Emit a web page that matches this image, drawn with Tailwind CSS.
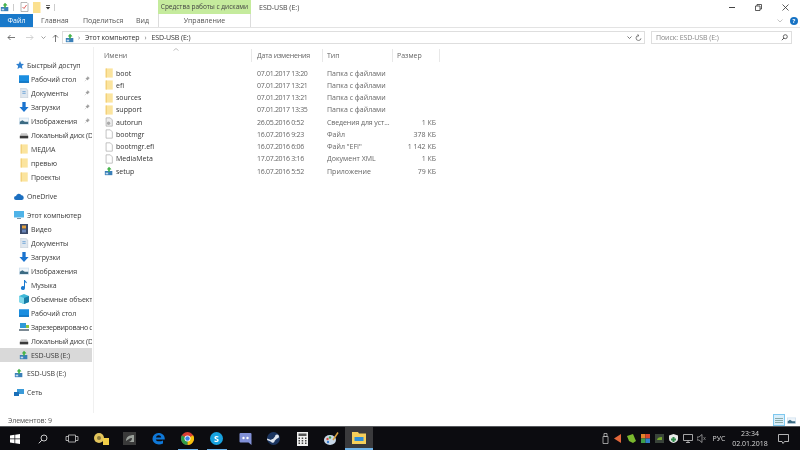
<!DOCTYPE html>
<html lang="ru">
<head>
    <meta charset="UTF-8">
    <title>ESD-USB (E:)</title>
    <script src="https://cdn.jsdelivr.net/npm/@tailwindcss/browser@4"></script>
</head>
<body class="bg-white overflow-hidden">
<svg class="hidden">
    <symbol id="folder" viewBox="0 0 12 12"><path d="M2 .5h8.500v11H2z" fill="#fbe49e"/><path d="M2 .5h1.500v11H2z" fill="#f2cf78"/></symbol>
    <symbol id="file" viewBox="0 0 12 12"><path d="M2.500 1h5l2.500 2.500V11h-7.500z" fill="#fff" stroke="#9a9a9a" stroke-width=".7"/></symbol>
    <symbol id="drive" viewBox="0 0 12 12"><path d="M1 6h9v5H1z" fill="#3a7fb8"/><path d="M2 8h3v2H2z" fill="#c5dcef"/><path d="M6 1l3 3-2 .5V7H5V4.500L3.500 4z" fill="#45b34a"/></symbol>
    <symbol id="desktop" viewBox="0 0 12 12"><path d="M0 1.500h12v9H0z" fill="#1b8ee0"/><path d="M0 9h12v1.500H0z" fill="#0b6cb8"/></symbol>
    <symbol id="docs" viewBox="0 0 12 12"><path d="M2 0h6l2.500 2.500V12H2z" fill="#dfe7ef" stroke="#a9b4bf" stroke-width=".5"/><path d="M4 4h4v1H4zM4 6h4v1H4z" fill="#6fa4d6"/></symbol>
    <symbol id="down" viewBox="0 0 12 12"><path d="M4 0h4v6h3.500L6 12 .5 6H4z" fill="#1b74cf"/></symbol>
    <symbol id="pics" viewBox="0 0 12 12"><path d="M0 2h12v8.500H0z" fill="#cfe0ee"/><path d="M1 3h10v6.500H1z" fill="#eef5fa"/><path d="M1 7l3-2 3 2 4 0v2.500H1z" fill="#3c6b83"/></symbol>
    <symbol id="disk" viewBox="0 0 12 12"><path d="M1 6.500 2.500 4h7L11 6.500V10H1z" fill="#c9c9c9"/><path d="M1 7h10v3H1z" fill="#3a3a3a"/></symbol>
    <symbol id="pin" viewBox="0 0 8 8"><path d="M5 .8 7.200 3 6 3.500 4.800 5.500 2.500 3.200 4.500 2zM3.300 4.700 1 7" fill="#9a9a9a" stroke="#9a9a9a" stroke-width=".5"/></symbol>
</svg>

<div class="h-[450px] w-[800px] flex flex-col font-['Open_Sans','Noto_Sans',sans-serif] text-[7px] leading-none text-[#3a3a3a] blur-[0.4px]">
    <!-- title bar -->
    <div class="h-[14px] flex items-center shrink-0">
        <svg class="ml-[0px] w-[10px] h-[10px]"><use href="#drive"/></svg>
        <div class="w-px h-[7px] bg-[#ccc] ml-[3px]"></div>
        <svg class="ml-[6px] w-[9px] h-[10px]" viewBox="0 0 9 10"><path d="M1 .5h6l1 1v8H1z" fill="#fff" stroke="#888" stroke-width=".6"/><path d="M2.500 5l1.500 1.500L6.500 3" fill="none" stroke="#d9534f" stroke-width=".9"/></svg>
        <svg class="ml-[4px] w-[8px] h-[11px]" viewBox="0 0 8 11"><path d="M0 0h7.500v11H0z" fill="#fbe08f"/></svg>
        <svg class="ml-[4px] w-[6px] h-[6px]" viewBox="0 0 6 6"><path d="M1 1h4v.8H1zM.8 3h4.400L3 5.500z" fill="#333"/></svg>
        <div class="w-px h-[7px] bg-[#ccc] ml-[3px]"></div>
        <div class="ml-[103px] w-[93px] h-[14px] bg-[#c5eb9d] flex items-center justify-center text-[6.500px] text-[#444]">Средства работы с дисками</div>
        <div class="ml-[8px] text-[#444]">ESD-USB (E:)</div>
        <div class="ml-auto flex items-center gap-[20px] pr-[11px]">
            <div class="w-[6px] h-px bg-[#444]"></div>
            <svg class="w-[7px] h-[7px]" viewBox="0 0 7 7"><path d="M.5 2h4.500v4.500H.5zM2 2V.5h4.500V5H5" fill="none" stroke="#333" stroke-width=".8"/></svg>
            <svg class="w-[7px] h-[7px]" viewBox="0 0 7 7"><path d="M.5.5l6 6M6.500.5l-6 6" stroke="#333" stroke-width=".8"/></svg>
        </div>
    </div>

    <!-- ribbon tabs -->
    <div class="h-[14px] flex items-center border-b border-[#e3e3e3] shrink-0 text-[#555]">
        <div class="w-[33px] h-[13px] bg-[#1979ca] text-white flex items-center justify-center">Файл</div>
        <div class="ml-[8px] w-[26px]">Главная</div>
        <div class="ml-[16px] w-[37px]">Поделиться</div>
        <div class="ml-[16px] w-[14px]">Вид</div>
        <div class="ml-[8px] w-[93px] h-[13px] border-x border-[#dcdcdc] flex items-center justify-center">Управление</div>
        <div class="ml-auto flex items-center gap-[7px] pr-[2px]">
            <svg class="w-[6px] h-[4px]" viewBox="0 0 6 4"><path d="M.5.5 3 3 5.500.5" fill="none" stroke="#aaa" stroke-width=".7"/></svg>
            <div class="w-[8px] h-[8px] rounded-full bg-[#1672c4] text-white flex items-center justify-center text-[6px] font-bold">?</div>
        </div>
    </div>

    <!-- address bar -->
    <div class="h-[19px] flex items-center shrink-0 tracking-[-0.1px]">
        <svg class="ml-[7px] w-[8px] h-[7px]" viewBox="0 0 8 7"><path d="M8 3.500H1M3.500 1 1 3.500 3.500 6" fill="none" stroke="#555" stroke-width=".8"/></svg>
        <svg class="ml-[11px] w-[8px] h-[7px]" viewBox="0 0 8 7"><path d="M0 3.500h7M4.500 1 7 3.500 4.500 6" fill="none" stroke="#c8c8c8" stroke-width=".8"/></svg>
        <svg class="ml-[7px] w-[5px] h-[3px]" viewBox="0 0 5 3"><path d="M.5.5 2.500 2.500 4.500.5" fill="none" stroke="#777" stroke-width=".7"/></svg>
        <svg class="ml-[6px] w-[7px] h-[8px]" viewBox="0 0 7 8"><path d="M3.500 8V1M1 3.500 3.500 1 6 3.500" fill="none" stroke="#555" stroke-width=".8"/></svg>
        <div class="ml-[3px] w-[583px] h-[13px] border border-[#dedede] flex items-center">
            <svg class="ml-[2px] w-[10px] h-[10px]"><use href="#drive"/></svg>
            <span class="ml-[3px] text-[#777]">›</span>
            <span class="ml-[5px] text-[#333]">Этот компьютер</span>
            <span class="ml-[5px] text-[#777]">›</span>
            <span class="ml-[5px] text-[#333]">ESD-USB (E:)</span>
            <svg class="ml-auto w-[5px] h-[3px]" viewBox="0 0 5 3"><path d="M.5.5 2.500 2.500 4.500.5" fill="none" stroke="#555" stroke-width=".8"/></svg>
            <svg class="ml-[3px] mr-[2px] w-[7px] h-[8px]" viewBox="0 0 7 8"><path d="M3.500 1.500a2.500 2.500 0 1 0 2.500 2.800M2.500.5l1.500 1-1.500 1.200" fill="none" stroke="#555" stroke-width=".7"/></svg>
        </div>
        <div class="ml-[6px] w-[141px] h-[13px] border border-[#dedede] flex items-center pl-[4px] text-[#888]">
            Поиск: ESD-USB (E:)
            <svg class="ml-auto mr-[3px] w-[7px] h-[7px]" viewBox="0 0 7 7"><circle cx="4.300" cy="2.700" r="2" fill="none" stroke="#444" stroke-width=".8"/><path d="M3 4 .8 6.200" stroke="#444" stroke-width=".9"/></svg>
        </div>
    </div>

    <!-- main -->
    <div class="flex-1 flex min-h-0">
        <!-- navigation pane -->
        <div class="w-[92px] flex flex-col pt-[11px] overflow-hidden shrink-0 tracking-[-0.1px]">
            <div class="h-[14px] flex items-center pl-[16px]"><svg class="w-[8px] h-[8px]" viewBox="0 0 8 8"><path d="M4 0l1.200 2.700L8 3 5.900 5l.6 3L4 6.500 1.500 8l.6-3L0 3l2.800-.3z" fill="#2f80d0"/></svg><span class="ml-[3px]">Быстрый доступ</span></div>
            <div class="h-[14px] flex items-center pl-[19px] relative"><svg class="w-[10px] h-[10px]"><use href="#desktop"/></svg><span class="ml-[2px]">Рабочий стол</span><svg class="absolute left-[84px] w-[6px] h-[6px]"><use href="#pin"/></svg></div>
            <div class="h-[14px] flex items-center pl-[19px] relative"><svg class="w-[10px] h-[10px]"><use href="#docs"/></svg><span class="ml-[2px]">Документы</span><svg class="absolute left-[84px] w-[6px] h-[6px]"><use href="#pin"/></svg></div>
            <div class="h-[14px] flex items-center pl-[19px] relative"><svg class="w-[10px] h-[10px]"><use href="#down"/></svg><span class="ml-[2px]">Загрузки</span><svg class="absolute left-[84px] w-[6px] h-[6px]"><use href="#pin"/></svg></div>
            <div class="h-[14px] flex items-center pl-[19px] relative"><svg class="w-[10px] h-[10px]"><use href="#pics"/></svg><span class="ml-[2px]">Изображения</span><svg class="absolute left-[84px] w-[6px] h-[6px]"><use href="#pin"/></svg></div>
            <div class="h-[14px] flex items-center pl-[19px] whitespace-nowrap"><svg class="w-[10px] h-[10px] shrink-0"><use href="#disk"/></svg><span class="ml-[2px] tracking-[-0.2px]">Локальный диск (D</span></div>
            <div class="h-[14px] flex items-center pl-[19px]"><svg class="w-[10px] h-[10px]"><use href="#folder"/></svg><span class="ml-[2px]">МЕДИА</span></div>
            <div class="h-[14px] flex items-center pl-[19px]"><svg class="w-[10px] h-[10px]"><use href="#folder"/></svg><span class="ml-[2px]">превью</span></div>
            <div class="h-[14px] flex items-center pl-[19px]"><svg class="w-[10px] h-[10px]"><use href="#folder"/></svg><span class="ml-[2px]">Проекты</span></div>

            <div class="h-[14px] mt-[5px] flex items-center pl-[14px]"><svg class="w-[10px] h-[7px]" viewBox="0 0 10 7"><path d="M2 7a2 2 0 0 1 0-4 3 3 0 0 1 5.500-.7A2.400 2.400 0 0 1 8 7z" fill="#1c6fc0"/></svg><span class="ml-[3px]">OneDrive</span></div>

            <div class="h-[14px] mt-[5px] flex items-center pl-[14px]"><svg class="w-[10px] h-[10px]" viewBox="0 0 10 10"><path d="M0 1h10v6.500H0z" fill="#4fb3e8"/><path d="M3 8h4v1H3z" fill="#7b93a6"/></svg><span class="ml-[3px]">Этот компьютер</span></div>
            <div class="h-[14px] flex items-center pl-[19px]"><svg class="w-[10px] h-[10px]" viewBox="0 0 10 10"><path d="M1 0h8v10H1z" fill="#3a4a6a"/><path d="M3 1.500h4v3H3z" fill="#e0a040"/><path d="M3 5.500h4v3H3z" fill="#6a86b8"/></svg><span class="ml-[2px]">Видео</span></div>
            <div class="h-[14px] flex items-center pl-[19px]"><svg class="w-[10px] h-[10px]"><use href="#docs"/></svg><span class="ml-[2px]">Документы</span></div>
            <div class="h-[14px] flex items-center pl-[19px]"><svg class="w-[10px] h-[10px]"><use href="#down"/></svg><span class="ml-[2px]">Загрузки</span></div>
            <div class="h-[14px] flex items-center pl-[19px]"><svg class="w-[10px] h-[10px]"><use href="#pics"/></svg><span class="ml-[2px]">Изображения</span></div>
            <div class="h-[14px] flex items-center pl-[19px]"><svg class="w-[10px] h-[10px]" viewBox="0 0 10 10"><path d="M5 0h1c.3 1.500 2 1.500 2 3.500-.7-.8-1.200-1-2-1V8a2 2 0 1 1-1-1.700z" fill="#1b7ad0"/></svg><span class="ml-[2px]">Музыка</span></div>
            <div class="h-[14px] flex items-center pl-[19px] whitespace-nowrap"><svg class="w-[10px] h-[10px] shrink-0" viewBox="0 0 10 10"><path d="M5 0l5 2v6l-5 2-5-2V2z" fill="#3fb8d8"/><path d="M5 4l5-2v6l-5 2z" fill="#1a7fa8"/><path d="M0 2l5 2v6L0 8z" fill="#7fd8ea"/></svg><span class="ml-[2px]">Объемные объекты</span></div>
            <div class="h-[14px] flex items-center pl-[19px]"><svg class="w-[10px] h-[10px]"><use href="#desktop"/></svg><span class="ml-[2px]">Рабочий стол</span></div>
            <div class="h-[14px] flex items-center pl-[19px] whitespace-nowrap"><svg class="w-[10px] h-[10px] shrink-0" viewBox="0 0 10 10"><path d="M1 1h6v5H1z" fill="#2f9ad8"/><path d="M0 7h10v2H0z" fill="#7c8a94"/><path d="M7 3h3v3H7z" fill="#8fc43e"/></svg><span class="ml-[2px] tracking-[-0.3px]">Зарезервировано с</span></div>
            <div class="h-[14px] flex items-center pl-[19px] whitespace-nowrap"><svg class="w-[10px] h-[10px] shrink-0"><use href="#disk"/></svg><span class="ml-[2px] tracking-[-0.2px]">Локальный диск (D</span></div>
            <div class="h-[14px] flex items-center pl-[19px] bg-[#d9d9d9]"><svg class="w-[10px] h-[10px]"><use href="#drive"/></svg><span class="ml-[2px]">ESD-USB (E:)</span></div>

            <div class="h-[14px] mt-[4px] flex items-center pl-[14px]"><svg class="w-[10px] h-[10px]"><use href="#drive"/></svg><span class="ml-[3px]">ESD-USB (E:)</span></div>
            <div class="h-[14px] mt-[5px] flex items-center pl-[14px]"><svg class="w-[10px] h-[10px]" viewBox="0 0 10 10"><path d="M3 2h7v5H3z" fill="#3a9ad8"/><path d="M0 5h5v4H0z" fill="#1b6fb8"/></svg><span class="ml-[3px]">Сеть</span></div>
        </div>

        <!-- file list -->
        <div class="flex-1 flex flex-col min-w-0 border-l border-[#f0f0f0] ml-[1px]">
            <div class="h-[13px] relative flex items-center mt-[2px] text-[#666]">
                <svg class="absolute left-[79px] top-[-1px] w-[6px] h-[3px]" viewBox="0 0 6 3"><path d="M.5 2.500 3 .5l2.500 2" fill="none" stroke="#999" stroke-width=".6"/></svg>
                <div class="w-[158px] pl-[10px] h-full flex items-center border-r border-[#e8e8e8]">Имени</div>
                <div class="w-[71px] pl-[5px] h-full flex items-center border-r border-[#e8e8e8] tracking-[-0.2px]">Дата изменения</div>
                <div class="w-[70px] pl-[4px] h-full flex items-center border-r border-[#e8e8e8]">Тип</div>
                <div class="w-[47px] pl-[4px] h-full flex items-center border-r border-[#e8e8e8]">Размер</div>
            </div>
            <div class="mt-[5px] flex flex-col text-[#666]">
                <div class="h-[12.25px] flex items-center"><svg class="ml-[10px] w-[10px] h-[10px]"><use href="#folder"/></svg><span class="w-[138px] pl-[2px] text-[#333]">boot</span><span class="w-[71px] pl-[5px] tracking-[-0.3px]">07.01.2017 13:20</span><span class="w-[70px] pl-[4px]">Папка с файлами</span></div>
                <div class="h-[12.25px] flex items-center"><svg class="ml-[10px] w-[10px] h-[10px]"><use href="#folder"/></svg><span class="w-[138px] pl-[2px] text-[#333]">efi</span><span class="w-[71px] pl-[5px] tracking-[-0.3px]">07.01.2017 13:21</span><span class="w-[70px] pl-[4px]">Папка с файлами</span></div>
                <div class="h-[12.25px] flex items-center"><svg class="ml-[10px] w-[10px] h-[10px]"><use href="#folder"/></svg><span class="w-[138px] pl-[2px] text-[#333]">sources</span><span class="w-[71px] pl-[5px] tracking-[-0.3px]">07.01.2017 13:21</span><span class="w-[70px] pl-[4px]">Папка с файлами</span></div>
                <div class="h-[12.25px] flex items-center"><svg class="ml-[10px] w-[10px] h-[10px]"><use href="#folder"/></svg><span class="w-[138px] pl-[2px] text-[#333]">support</span><span class="w-[71px] pl-[5px] tracking-[-0.3px]">07.01.2017 13:35</span><span class="w-[70px] pl-[4px]">Папка с файлами</span></div>
                <div class="h-[12.25px] flex items-center"><svg class="ml-[10px] w-[10px] h-[10px]" viewBox="0 0 12 12"><path d="M2.500 1h5l2.500 2.500V11h-7.500z" fill="#eee" stroke="#999" stroke-width=".7"/><circle cx="5.500" cy="7.500" r="2" fill="#aaa"/></svg><span class="w-[138px] pl-[2px] text-[#333]">autorun</span><span class="w-[71px] pl-[5px] tracking-[-0.3px]">26.05.2016 0:52</span><span class="w-[70px] pl-[4px] tracking-[-0.1px]">Сведения для уст...</span><span class="w-[43px] text-right">1 КБ</span></div>
                <div class="h-[12.25px] flex items-center"><svg class="ml-[10px] w-[10px] h-[10px]"><use href="#file"/></svg><span class="w-[138px] pl-[2px] text-[#333]">bootmgr</span><span class="w-[71px] pl-[5px] tracking-[-0.3px]">16.07.2016 9:23</span><span class="w-[70px] pl-[4px]">Файл</span><span class="w-[43px] text-right">378 КБ</span></div>
                <div class="h-[12.25px] flex items-center"><svg class="ml-[10px] w-[10px] h-[10px]"><use href="#file"/></svg><span class="w-[138px] pl-[2px] text-[#333]">bootmgr.efi</span><span class="w-[71px] pl-[5px] tracking-[-0.3px]">16.07.2016 6:06</span><span class="w-[70px] pl-[4px]">Файл "EFI"</span><span class="w-[43px] text-right">1 142 КБ</span></div>
                <div class="h-[12.25px] flex items-center"><svg class="ml-[10px] w-[10px] h-[10px]"><use href="#file"/></svg><span class="w-[138px] pl-[2px] text-[#333]">MediaMeta</span><span class="w-[71px] pl-[5px] tracking-[-0.3px]">17.07.2016 3:16</span><span class="w-[70px] pl-[4px]">Документ XML</span><span class="w-[43px] text-right">1 КБ</span></div>
                <div class="h-[12.25px] flex items-center"><svg class="ml-[10px] w-[10px] h-[10px]"><use href="#drive"/></svg><span class="w-[138px] pl-[2px] text-[#333]">setup</span><span class="w-[71px] pl-[5px] tracking-[-0.3px]">16.07.2016 5:52</span><span class="w-[70px] pl-[4px]">Приложение</span><span class="w-[43px] text-right">79 КБ</span></div>
            </div>
        </div>
    </div>

    <!-- status bar -->
    <div class="h-[13px] flex items-center shrink-0 pl-[8px] text-[#555]">
        <span class="mt-[2px] tracking-[-0.1px]">Элементов: 9</span>
        <div class="ml-auto mr-[4px] mt-[1px] flex items-center gap-[2px]">
            <div class="w-[12px] h-[12px] bg-[#d8eefb] border border-[#7ec8ef] flex flex-col justify-center gap-[1px] px-[1px]">
                <div class="h-px bg-[#8aa]"></div><div class="h-px bg-[#8aa]"></div><div class="h-px bg-[#8aa]"></div>
            </div>
            <svg class="w-[9px] h-[9px]"><use href="#pics"/></svg>
        </div>
    </div>

    <!-- taskbar -->
    <div class="h-[24px] shrink-0 bg-[#0c0c10] border-t border-[#55585c] flex items-center text-[#d8d8d8]">
        <div class="w-[29px] h-full flex items-center justify-center"><svg class="w-[10px] h-[10px]" viewBox="0 0 10 10"><path d="M0 1.500 4.500.8v3.800H0zM5.200.7 10 0v4.600H5.200zM0 5.300h4.500v3.900L0 8.500zM5.200 5.300H10V10l-4.800-.7z" fill="#fff"/></svg></div>
        <div class="w-[28px] h-full flex items-center justify-center"><svg class="w-[10px] h-[10px]" viewBox="0 0 10 10"><circle cx="6" cy="4" r="3" fill="none" stroke="#ddd" stroke-width=".9"/><path d="M3.800 6.200.8 9.300" stroke="#ddd" stroke-width="1"/></svg></div>
        <div class="w-[29px] h-full flex items-center justify-center"><svg class="w-[14px] h-[9px]" viewBox="0 0 14 9"><path d="M3.500 1h7v7h-7zM3.500 2.500H1v4h2.500M10.500 2.500H13v4h-2.500" fill="none" stroke="#ccc" stroke-width=".8"/></svg></div>
        <div class="w-[29px] h-full flex items-center justify-center"><svg class="w-[16px] h-[14px]" viewBox="0 0 16 14"><circle cx="6" cy="6" r="5" fill="#e3c55c"/><circle cx="6" cy="6" r="2" fill="#8c7a3a"/><path d="M10 6h6v7h-6z" fill="#f3cf48"/></svg></div>
        <div class="w-[29px] h-full flex items-center justify-center"><svg class="w-[13px] h-[13px]" viewBox="0 0 13 13"><path d="M0 0h13v13H0z" fill="#3a3a3a"/><path d="M3 9c0-4 3-6 8-6v7H6c2-1 3-2 3-4-3 0-4 2-6 3z" fill="#9aa09a"/></svg></div>
        <div class="w-[29px] h-full flex items-center justify-center"><svg class="w-[13px] h-[13px]" viewBox="0 0 13 13"><path d="M6.500 1a5.800 5.800 0 0 0-6 6c0 4 5 7 10.500 4.500V8.500C8 10 4 9.500 3.800 7.500h9C13 3.500 10.500 1 6.500 1zM4 5.500C4.300 4 5.500 3.300 6.700 3.300S9 4 9.200 5.500z" fill="#0f78d8"/></svg></div>
        <div class="w-[29px] h-full flex flex-col items-center justify-center relative"><svg class="w-[13px] h-[13px]" viewBox="0 0 13 13"><circle cx="6.500" cy="6.500" r="6.500" fill="#d93f33"/><path d="M6.500 6.500 12.100 3.200A6.500 6.500 0 0 1 6.500 13z" fill="#f4c20d"/><path d="M6.500 6.500 6.500 13A6.500 6.500 0 0 1 .9 3.200z" fill="#2f9e48"/><circle cx="6.500" cy="6.500" r="3" fill="#fff"/><circle cx="6.500" cy="6.500" r="2.200" fill="#3f83e8"/></svg><div class="absolute bottom-0 w-[20px] h-px bg-[#6fb3e8]"></div></div>
        <div class="w-[29px] h-full flex flex-col items-center justify-center relative"><div class="w-[13px] h-[13px] rounded-full bg-[#17a3e0] text-white flex items-center justify-center text-[9px] font-bold">S</div><div class="absolute bottom-0 w-[20px] h-px bg-[#6fb3e8]"></div></div>
        <div class="w-[28px] h-full flex items-center justify-center"><svg class="w-[13px] h-[13px]" viewBox="0 0 13 13"><path d="M1.500 1h10a1 1 0 0 1 1 1v11l-3-2.500h-8a1 1 0 0 1-1-1V2a1 1 0 0 1 1-1z" fill="#8291d8"/><circle cx="4.500" cy="6" r="1.200" fill="#fff"/><circle cx="8.500" cy="6" r="1.200" fill="#fff"/></svg></div>
        <div class="w-[29px] h-full flex items-center justify-center"><svg class="w-[13px] h-[13px]" viewBox="0 0 13 13"><circle cx="6.500" cy="6.500" r="6.500" fill="#1b3560"/><path d="M0 8l4 1.800a2 2 0 0 0 3.700-1L10 6.500a2 2 0 1 0-2-2L6 7a2 2 0 0 0-2 1L.2 6.500z" fill="#dfe6ef"/></svg></div>
        <div class="w-[29px] h-full flex items-center justify-center"><svg class="w-[11px] h-[14px]" viewBox="0 0 11 14"><path d="M0 0h11v14H0z" fill="#f0f0f0"/><path d="M1.500 1.500h8v2.500h-8z" fill="#555"/><path d="M1.500 5.500h1.500v1.500H1.500zM4.700 5.500h1.500v1.500H4.700zM8 5.500h1.500v1.500H8zM1.500 8h1.500v1.500H1.500zM4.700 8h1.500v1.500H4.700zM8 8h1.500v1.500H8zM1.500 10.500h1.500v1.500H1.500zM4.700 10.500h1.500v1.500H4.700zM8 10.500h1.500v1.500H8z" fill="#444"/></svg></div>
        <div class="w-[28px] h-full flex items-center justify-center"><svg class="w-[15px] h-[14px]" viewBox="0 0 15 14"><ellipse cx="6" cy="8" rx="6" ry="5" fill="#c8d8e8"/><circle cx="3.500" cy="7" r="1.200" fill="#d94f3d"/><circle cx="6" cy="5.500" r="1.200" fill="#3fa04a"/><circle cx="4" cy="10" r="1.200" fill="#3a7fd0"/><path d="M9 8 14 .5" stroke="#d8a040" stroke-width="1.500"/></svg></div>
        <div class="w-[28px] h-full bg-[#3a3a3c] border-b-2 border-[#6fb3e8] flex items-center justify-center"><svg class="w-[14px] h-[12px]" viewBox="0 0 14 12"><path d="M0 0h6l1 1.500h7V12H0z" fill="#f6cf5a"/><path d="M2.500 5h9v4h-9z" fill="#2f8fd8"/></svg></div>

        <div class="ml-auto flex items-center h-full">
            <svg class="w-[7px] h-[11px] mr-[5px]" viewBox="0 0 7 11"><path d="M2 .5h3v3H2zM1 3.500h5v7H1z" fill="none" stroke="#bbb" stroke-width=".8"/></svg>
            <svg class="w-[7px] h-[9px] mr-[6px]" viewBox="0 0 7 9"><path d="M7 0v9L0 4.500z" fill="#e2663a"/></svg>
            <svg class="w-[9px] h-[9px] mr-[5px]" viewBox="0 0 9 9"><path d="M0 2l6-2 3 7-3 2-4-2z" fill="#7ab82e"/></svg>
            <svg class="w-[9px] h-[9px] mr-[5px]" viewBox="0 0 9 9"><path d="M0 0h4.500v4.500H0z" fill="#e2832a"/><path d="M4.500 0H9v4.500H4.500z" fill="#d9452f"/><path d="M0 4.500h4.500V9H0z" fill="#3f9e48"/><path d="M4.500 4.500H9V9H4.500z" fill="#2f7fc8"/></svg>
            <svg class="w-[9px] h-[9px] mr-[5px]" viewBox="0 0 9 9"><path d="M0 0h9v9H0z" fill="#39433a"/><path d="M2 6c0-2 2-3 5-3v3z" fill="#76a82c"/></svg>
            <svg class="w-[9px] h-[9px] mr-[5px]" viewBox="0 0 9 9"><path d="M4.500 0 9 1.500V5c0 2-2 3.500-4.500 4C2 8.500 0 7 0 5V1.500z" fill="#e8e8e8"/><path d="M3.500 3h2v1.500h1.500v2h-1.500V8h-2V6.500H2v-2h1.500z" fill="#2f8a4a"/></svg>
            <svg class="w-[10px] h-[9px] mr-[4px]" viewBox="0 0 10 9"><path d="M.5.500h9v6h-9zM3 8.500h4M5 6.500v2" fill="none" stroke="#ccc" stroke-width=".8"/></svg>
            <svg class="w-[10px] h-[9px] mr-[4px]" viewBox="0 0 10 9"><path d="M0 3h2l3-2.500v8L2 6H0z" fill="none" stroke="#bbb" stroke-width=".7"/><path d="M6.500 3l2 3M8.500 3l-2 3" stroke="#999" stroke-width=".6"/></svg>
            <span class="w-[16px] text-center">РУС</span>
            <div class="ml-[5px] w-[36px] flex flex-col items-center gap-[3px]"><span>23:34</span><span>02.01.2018</span></div>
            <svg class="ml-[10px] mr-[11px] w-[11px] h-[10px]" viewBox="0 0 11 10"><path d="M.5.500h10v7H6.500L5 9.500 4 7.500H.5z" fill="none" stroke="#ddd" stroke-width=".8"/></svg>
        </div>
    </div>
</div>
</body>
</html>
